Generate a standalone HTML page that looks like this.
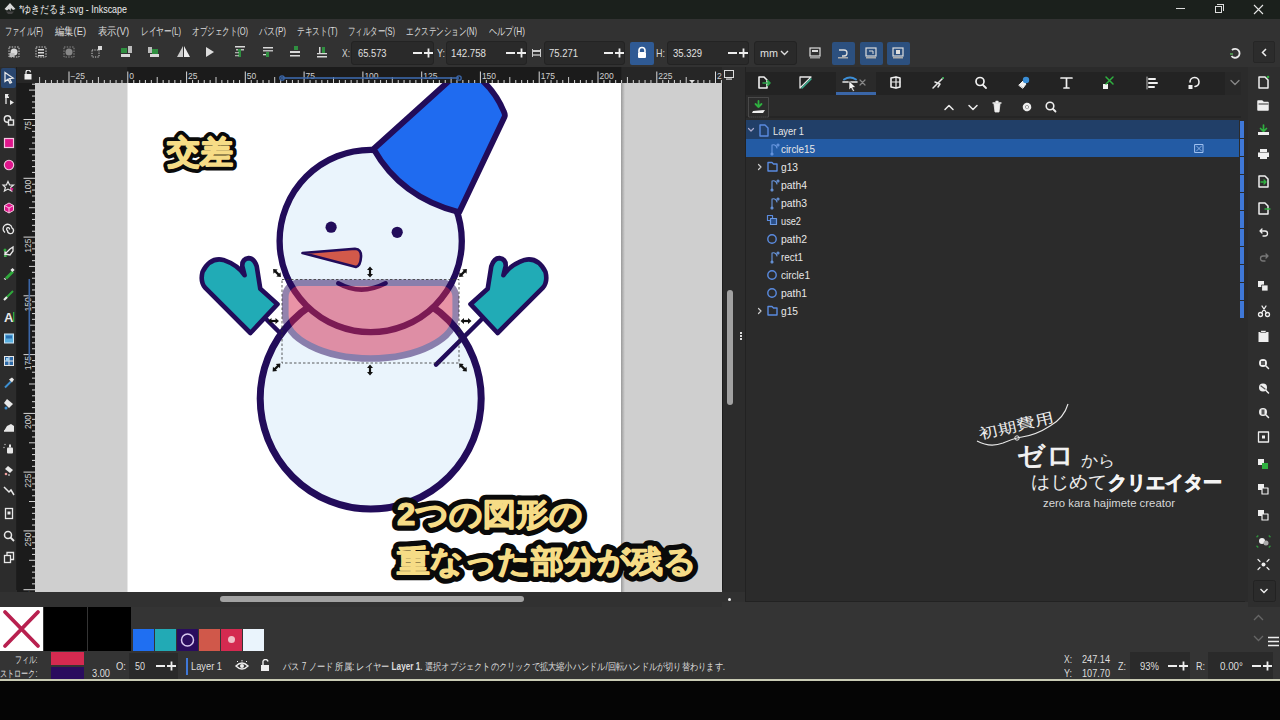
<!DOCTYPE html>
<html><head><meta charset="utf-8">
<style>
*{margin:0;padding:0;box-sizing:border-box}
html,body{width:1280px;height:720px;overflow:hidden;background:#050505;font-family:"Liberation Sans",sans-serif;color:#e6e6e6}
.a{position:absolute}
#title{left:0;top:0;width:1280px;height:18.5px;background:#1b201c}
#menu{left:0;top:18.5px;width:1280px;height:22.5px;background:#323232}
#tool{left:0;top:41px;width:1280px;height:26px;background:#323232}
#tbox{left:0;top:67px;width:17px;height:524.5px;background:#2c2c2c}
#hrul{left:35px;top:67px;width:687px;height:16px;background:#262626;overflow:hidden}
#vrul{left:17px;top:83px;width:18px;height:508.5px;background:#1b1b1b;overflow:hidden}
#corner{left:17px;top:67px;width:18px;height:16px;background:#262626}
#desk{left:35px;top:83px;width:687px;height:508.5px;background:#cfcfcf;overflow:hidden}
#vscroll{left:722px;top:67px;width:23px;height:540px;background:#2c2c2c}
#hscroll{left:0px;top:591.5px;width:745px;height:15.5px;background:#313131}
#panel{left:745px;top:67px;width:503px;height:535px;background:#2b2b2b}
#cmd{left:1248px;top:67px;width:32px;height:540px;background:#2e2e2e}
#pal{left:0;top:607px;width:1280px;height:44px;background:#343434}
#status{left:0;top:651px;width:1280px;height:28px;background:#343434}
#bottomline{left:0;top:679px;width:1280px;height:2px;background:#c9cbb4}
.mi{position:absolute;top:5px;font-size:11px;color:#dcdcdc;white-space:nowrap}
.lab{font-size:10.5px;line-height:12px;color:#d8d8d8}
.inp{position:absolute;height:24px;background:#2a2a2a;border:1px solid #232323;border-radius:3px}
.inp>span{position:absolute;top:5px;font-size:10.5px;line-height:12px;color:#e0e0e0;white-space:nowrap}
.fw{vertical-align:top}
.pm{position:absolute;top:6px}
.btnb{position:absolute;top:1px;width:23px;height:23px;background:#2c507f;border-radius:2px}
.tr{font-size:10.5px;line-height:12px;color:#e8e8e8;white-space:nowrap}
.st{font-size:10px;line-height:11px;color:#dedede;white-space:nowrap}
.st b{font-weight:bold}
</style></head>
<body>
<!-- TITLE -->
<div id="title" class="a">
  <svg class="a" style="left:3px;top:2px" width="14" height="14" viewBox="0 0 14 14"><path d="M7 1 L12.5 7 L10 8 L8 6 L7.5 9 L6 7 L4 8.5 L1.5 7 Z" fill="#d8d8d8"></path><path d="M3 9.5 L11 9.5 L9 12 L5 12Z" fill="#444"></path></svg>
  <div class="a" style="left:19px;top:2px;font-size:11px;color:#ececec;white-space:nowrap"><span style="display: inline-block; transform-origin: left center; transform: scaleX(0.8104);">*ゆきだるま.svg - Inkscape</span></div>
  <div class="a" style="left:1176px;top:8px;width:9px;height:1px;background:#ddd"></div>
  <div class="a" style="left:1215px;top:6px;width:7px;height:7px;border:1px solid #ddd"></div>
  <div class="a" style="left:1217px;top:4px;width:7px;height:7px;border-top:1px solid #ddd;border-right:1px solid #ddd"></div>
  <svg class="a" style="left:1253px;top:4px" width="11" height="11" viewBox="0 0 11 11"><path d="M1 1L10 10M10 1L1 10" stroke="#e6e6e6" stroke-width="1.1"></path></svg>
</div>
<!-- MENU -->
<div id="menu" class="a">
  <span class="mi" style="left:5px"><span style="display: inline-block; transform-origin: left center; transform: scaleX(0.6546);">ファイル(F)</span></span>
  <span class="mi" style="left:55px"><span style="display: inline-block; transform-origin: left center; transform: scaleX(0.8453);">編集(E)</span></span>
  <span class="mi" style="left:98px"><span style="display: inline-block; transform-origin: left center; transform: scaleX(0.8453);">表示(V)</span></span>
  <span class="mi" style="left:141px"><span style="display: inline-block; transform-origin: left center; transform: scaleX(0.6962);">レイヤー(L)</span></span>
  <span class="mi" style="left:192px"><span style="display: inline-block; transform-origin: left center; transform: scaleX(0.6838);">オブジェクト(O)</span></span>
  <span class="mi" style="left:259px"><span style="display: inline-block; transform-origin: left center; transform: scaleX(0.7363);">パス(P)</span></span>
  <span class="mi" style="left:297px"><span style="display: inline-block; transform-origin: left center; transform: scaleX(0.6977);">テキスト(T)</span></span>
  <span class="mi" style="left:348px"><span style="display: inline-block; transform-origin: left center; transform: scaleX(0.6746);">フィルター(S)</span></span>
  <span class="mi" style="left:406px"><span style="display: inline-block; transform-origin: left center; transform: scaleX(0.6874);">エクステンション(N)</span></span>
  <span class="mi" style="left:489px"><span style="display: inline-block; transform-origin: left center; transform: scaleX(0.7456);">ヘルプ(H)</span></span>
</div>
<!-- TOOLBAR -->
<div id="tool" class="a">
  <svg class="a" style="left:0;top:0" width="340" height="26" viewBox="0 0 340 26">
    <g fill="#d9d9d9">
      <!-- select all -->
      <rect x="9" y="6" width="10" height="10" fill="none" stroke="#ccc" stroke-dasharray="1.5 1.2"></rect>
      <circle cx="14" cy="11" r="3.5"></circle><rect x="9.5" y="12" width="5" height="4" fill="#bbb"></rect>
      <!-- select all in all layers -->
      <rect x="36" y="6" width="10" height="10" fill="none" stroke="#ccc" stroke-dasharray="1.5 1.2"></rect>
      <rect x="38" y="8" width="6" height="1.5"></rect><rect x="38" y="11" width="6" height="1.5"></rect><rect x="38" y="14" width="6" height="1.2"></rect>
      <!-- deselect -->
      <rect x="64" y="6" width="10" height="10" fill="none" stroke="#888" stroke-dasharray="1.5 1.2"></rect>
      <circle cx="69" cy="11" r="3.5" fill="#888"></circle>
      <!-- transform -->
      <rect x="92" y="9" width="7" height="7" fill="none" stroke="#ccc" stroke-dasharray="1.2 1.2"></rect><rect x="98" y="5" width="4" height="4"></rect>
      <!-- raise to top -->
      <rect x="121" y="7" width="6" height="5" fill="#2f8f40"></rect><rect x="128" y="5" width="4" height="7" fill="#bbb"></rect><rect x="121" y="13" width="9" height="3"></rect>
      <!-- lower -->
      <rect x="148" y="6" width="4" height="6" fill="#bbb"></rect><rect x="152" y="8" width="6" height="5" fill="#2f8f40"></rect><rect x="150" y="13" width="9" height="3"></rect>
      <!-- flip h -->
      <path d="M183 5 L183 16 L177 16 Z" fill="#ccc"></path><path d="M184 5 L190 16 L184 16Z" fill="#eee"></path>
      <!-- flip v (rotate) -->
      <path d="M206 6 L214 11 L206 16 Z" fill="#ddd"></path>
      <!-- align icons -->
      <rect x="235" y="5" width="10" height="1.5"></rect><rect x="236" y="8" width="8" height="1.5" fill="#bbb"></rect><rect x="238" y="8" width="3" height="8" fill="#2f8f40"></rect><rect x="235" y="11" width="4" height="1.3" fill="#aaa"></rect><rect x="235" y="14" width="4" height="1.3" fill="#aaa"></rect>
      <rect x="263" y="6" width="10" height="1.5"></rect><rect x="263" y="9" width="10" height="1.5" fill="#bbb"></rect><rect x="266" y="11" width="3" height="5" fill="#2f8f40"></rect><rect x="263" y="13" width="3" height="1.3"></rect>
      <rect x="290" y="10" width="10" height="2"></rect><rect x="294" y="5" width="4" height="4" fill="#2f8f40"></rect><rect x="290" y="14" width="10" height="1.5"></rect>
      <rect x="317" y="15" width="10" height="1.5"></rect><rect x="319" y="6" width="1.5" height="7"></rect><rect x="322" y="6" width="3" height="7" fill="#2f8f40"></rect><rect x="317" y="12" width="10" height="1.3"></rect>
    </g>
  </svg>
  <span class="a lab" style="left:342px;top:6px"><span style="display: inline-block; transform-origin: left center; transform: scaleX(0.8063);">X:</span></span>
  <div class="a inp" style="left:351px;top:0px;width:83px"><span style="left:6px"><span style="display: inline-block; transform-origin: left center; transform: scaleX(0.8872);">65.573</span></span><svg class="pm" style="left:60px" width="22" height="10" viewBox="0 0 22 10"><path d="M1 5H10M12 5H21M16.5 0.5V9.5" stroke="#eee" stroke-width="1.8"></path></svg></div>
  <span class="a lab" style="left:437px;top:6px"><span style="display: inline-block; transform-origin: left center; transform: scaleX(0.8562);">Y:</span></span>
  <div class="a inp" style="left:446px;top:0px;width:81px"><span style="left:4px"><span style="display: inline-block; transform-origin: left center; transform: scaleX(0.9218);">142.758</span></span><svg class="pm" style="left:58px" width="22" height="10" viewBox="0 0 22 10"><path d="M1 5H10M12 5H21M16.5 0.5V9.5" stroke="#eee" stroke-width="1.8"></path></svg></div>
  <svg class="a" style="left:531px;top:6px" width="12" height="12" viewBox="0 0 12 12"><rect x="1" y="3" width="9" height="2" fill="#ccc"></rect><rect x="1" y="7" width="9" height="2" fill="#999"></rect><rect x="1" y="2" width="1" height="8" fill="#ccc"></rect><rect x="9" y="2" width="1" height="8" fill="#ccc"></rect></svg>
  <div class="a inp" style="left:544px;top:0px;width:81px"><span style="left:4px"><span style="display: inline-block; transform-origin: left center; transform: scaleX(0.9027);">75.271</span></span><svg class="pm" style="left:58px" width="22" height="10" viewBox="0 0 22 10"><path d="M1 5H10M12 5H21M16.5 0.5V9.5" stroke="#eee" stroke-width="1.8"></path></svg></div>
  <div class="a" style="left:630px;top:1px;width:24px;height:23px;background:#2f5a94;border-radius:2px"></div>
  <svg class="a" style="left:636px;top:5px" width="12" height="14" viewBox="0 0 12 14"><path d="M3 6 V4.5 A3 3 0 0 1 9 4.5 V6" fill="none" stroke="#fff" stroke-width="1.6"></path><rect x="2" y="6" width="8" height="6" rx="1" fill="#fff"></rect></svg>
  <span class="a lab" style="left:656px;top:6px"><span style="display: inline-block; transform-origin: left center; transform: scaleX(0.8571);">H:</span></span>
  <div class="a inp" style="left:667px;top:0px;width:82px"><span style="left:5px"><span style="display: inline-block; transform-origin: left center; transform: scaleX(0.9027);">35.329</span></span><svg class="pm" style="left:59px" width="22" height="10" viewBox="0 0 22 10"><path d="M1 5H10M12 5H21M16.5 0.5V9.5" stroke="#eee" stroke-width="1.8"></path></svg></div>
  <div class="a inp" style="left:754px;top:0px;width:43px"><span style="left:5px"><span style="display: inline-block; transform-origin: left center; transform: scaleX(1.0286);">mm</span></span></div>
  <svg class="a" style="left:780px;top:9px" width="9" height="6" viewBox="0 0 9 6"><path d="M1 1 L4.5 4.5 L8 1" fill="none" stroke="#ddd" stroke-width="1.4"></path></svg>
  <svg class="a" style="left:808px;top:5px" width="14" height="14" viewBox="0 0 14 14"><rect x="2" y="2" width="10" height="8" fill="none" stroke="#ddd" stroke-width="1.2"></rect><rect x="4" y="4" width="6" height="2" fill="#ddd"></rect><rect x="2" y="11" width="10" height="1.5" fill="#999"></rect></svg>
  <div class="a btnb" style="left:832px"></div>
  <div class="a btnb" style="left:860px"></div>
  <div class="a btnb" style="left:887px"></div>
  <svg class="a" style="left:836px;top:5px" width="14" height="14" viewBox="0 0 14 14"><path d="M3 4 H8 A3 3 0 0 1 8 10 H6" fill="none" stroke="#ddd" stroke-width="1.3"></path><rect x="2" y="11" width="10" height="1.5" fill="#aaa"></rect></svg>
  <svg class="a" style="left:864px;top:5px" width="14" height="14" viewBox="0 0 14 14"><rect x="2" y="2" width="10" height="8" fill="none" stroke="#ddd" stroke-width="1.2"></rect><path d="M5 5 L9 5 L9 8" stroke="#ddd" fill="none"></path><rect x="2" y="11" width="10" height="1.5" fill="#aaa"></rect></svg>
  <svg class="a" style="left:891px;top:5px" width="14" height="14" viewBox="0 0 14 14"><rect x="2" y="2" width="10" height="8" fill="none" stroke="#ddd" stroke-width="1.2"></rect><rect x="5" y="4" width="4" height="4" fill="#ddd"></rect><rect x="2" y="11" width="10" height="1.5" fill="#aaa"></rect></svg>
  <svg class="a" style="left:1228px;top:5px" width="14" height="14" viewBox="0 0 14 14"><path d="M4 4 A4.5 4.5 0 1 1 3.5 10" fill="none" stroke="#e8e8e8" stroke-width="1.8"></path><path d="M2 8 L5 8" stroke="#5a5" stroke-width="1.5"></path></svg>
  <div class="a" style="left:1253px;top:0px;width:22px;height:22px;border:1px solid #262626;background:#2c2c2c;border-radius:2px"></div>
  <svg class="a" style="left:1260px;top:7px" width="8" height="9" viewBox="0 0 8 9"><path d="M6 1 L2.5 4.5 L6 8" fill="none" stroke="#eee" stroke-width="1.5"></path></svg>
</div>
<div id="tbox" class="a"></div>
<div id="corner" class="a"></div>
<div id="hrul" class="a"></div>
<div id="vrul" class="a"></div>
<div id="desk" class="a"></div>
<div id="vscroll" class="a"></div>
<div id="hscroll" class="a"></div>
<div id="panel" class="a"></div>
<div class="a" style="left:722px;top:602px;width:526px;height:5px;background:#343434"></div>
<div id="cmd" class="a"></div>
<div id="pal" class="a"></div>
<div id="status" class="a"></div>
<div id="bottomline" class="a"></div>
<div class="a" style="left:0;top:0;width:17px;height:607px;pointer-events:none"></div>
<div class="a" style="left:1px;top:68px;width:15px;height:20px;background:#29466f;border-radius:2px"></div>
<svg class="a" style="left:0;top:0" width="17" height="600" viewBox="0 0 17 600"><g transform="translate(9,77.5)"><path d="M-4 -5 L4 0.5 L0.5 1 L2.5 5 L1 5.6 L-1 1.8 L-4 4 Z" fill="#2a4a7a" stroke="#e8e8e8" stroke-width="1.3"></path></g><g transform="translate(9,99)"><rect x="-4" y="-5" width="4" height="4" fill="#e8e8e8"></rect><path d="M-3 -1 V5" stroke="#e8e8e8" stroke-width="1.3"></path><path d="M1 1 L5 3.5 L1 6 Z" fill="#e8e8e8"></path><rect x="-1" y="-4.5" width="2" height="2" fill="#333"></rect></g><g transform="translate(9,120.5)"><circle cx="-1.5" cy="-1.5" r="3.2" fill="none" stroke="#e8e8e8" stroke-width="1.4"></circle><rect x="-0.5" y="-0.5" width="5" height="5" fill="#2c2c2c" stroke="#e8e8e8" stroke-width="1.4"></rect></g><g transform="translate(9,143)"><rect x="-4.5" y="-4.5" width="9" height="9" fill="#e0158c" stroke="#f4c6e0" stroke-width="1.2"></rect></g><g transform="translate(9,165)"><circle r="4.7" fill="#e0158c" stroke="#f4c6e0" stroke-width="1.1"></circle></g><g transform="translate(9,186.5)"><path d="M-1 -5 L0.6 -1.6 L4.5 -1.4 L1.6 1 L2.6 4.6 L-1 2.6 L-4.6 4.6 L-3.6 1 L-6 -1.4 L-2.6 -1.6 Z" fill="none" stroke="#e8e8e8" stroke-width="1.2"></path><path d="M1 1 L4.5 2 L3 5 Z" fill="#e0158c"></path></g><g transform="translate(9,208)"><path d="M0 -5 L4.5 -2.5 L4.5 2.5 L0 5 L-4.5 2.5 L-4.5 -2.5 Z" fill="#e0158c" stroke="#f4c6e0" stroke-width="1"></path><path d="M-4.5 -2.5 L0 0 L4.5 -2.5 M0 0 V5" stroke="#f4c6e0" stroke-width="1" fill="none"></path></g><g transform="translate(9,229.5)"><path d="M0.5 0 A1.5 1.5 0 1 0 -1.5 1 A3 3 0 1 0 3 -1.5 A4.5 4.5 0 1 0 -4 3" fill="none" stroke="#e8e8e8" stroke-width="1.3"></path></g><g transform="translate(9,252)"><path d="M-4 5 L-4 -1 M-4 2 L1 -3 L4 -5 L4 -1 L1 3 Z" fill="none" stroke="#e8e8e8" stroke-width="1.3"></path><circle cx="-4" cy="-2" r="1.5" fill="#2faa3c"></circle><path d="M-5 4 L-2 4" stroke="#2faa3c" stroke-width="1.5"></path></g><g transform="translate(9,273.5)"><path d="M-4 4 L3 -3 L5 -1 L-2 6 Z" fill="#2faa3c"></path><path d="M-5 5 L-3 6" stroke="#e8e8e8" stroke-width="1.2"></path><rect x="2" y="-5" width="3" height="3" fill="#e8e8e8" transform="rotate(45 3.5 -3.5)"></rect></g><g transform="translate(9,295)"><path d="M-4 4 L4 -4" stroke="#2faa3c" stroke-width="2"></path><path d="M-5 5 L-2 2" stroke="#e8e8e8" stroke-width="2.2"></path></g><g transform="translate(9,317)"><text x="-5" y="5" font-size="13" font-weight="bold" fill="#e8e8e8" font-family="Liberation Sans">A</text><rect x="4" y="-5" width="1.3" height="10" fill="#2faa3c"></rect></g><g transform="translate(9,338.5)"><rect x="-4.5" y="-4.5" width="9" height="9" fill="#5ab0e0" stroke="#cfe6f5" stroke-width="1"></rect><rect x="-3" y="-3" width="6" height="3" fill="#2a6fb0"></rect></g><g transform="translate(9,361)"><rect x="-4.5" y="-4.5" width="9" height="9" fill="#2d6aa8" stroke="#e8e8e8" stroke-width="1"></rect><path d="M-4 0 H4 M0 -4 V4" stroke="#e8e8e8" stroke-width="1"></path><rect x="-3" y="-3" width="3" height="3" fill="#9fd0f0"></rect></g><g transform="translate(9,382.5)"><path d="M-4 5 L2 -1" stroke="#3d8fd0" stroke-width="2"></path><path d="M0 -3 L3 -5 L5 -3 L3 0 Z" fill="#e8e8e8"></path></g><g transform="translate(9,404)"><path d="M-2 -5 L4 0 L0 4 L-5 -1 Z" fill="#e8e8e8"></path><circle cx="-3" cy="4" r="1.5" fill="#3d8fd0"></circle></g><g transform="translate(9,427)"><path d="M-5 4 L-2 -1 L2 -3 L5 -1 L5 4 Z" fill="#e8e8e8"></path><path d="M-5 4 L5 4" stroke="#e8e8e8" stroke-width="1.5"></path></g><g transform="translate(9,448.5)"><rect x="-2" y="-1" width="6" height="6" rx="1" fill="#e8e8e8"></rect><rect x="0" y="-4" width="2" height="3" fill="#e8e8e8"></rect><circle cx="-4" cy="-4" r="0.8" fill="#aaa"></circle><circle cx="-5" cy="-1" r="0.8" fill="#aaa"></circle></g><g transform="translate(9,470)"><path d="M-1 -4 L4 0 L1 3 L-4 -1 Z" fill="#e8e8e8"></path><circle cx="-3" cy="4" r="1.3" fill="#f0a0a0"></circle><circle cx="0" cy="5" r="1" fill="#aaa"></circle></g><g transform="translate(9,491)"><path d="M-5 -4 L0 1 L2 -1 L5 4" fill="none" stroke="#e8e8e8" stroke-width="1.5"></path></g><g transform="translate(9,513.5)"><rect x="-3.5" y="-5" width="7" height="10" fill="none" stroke="#e8e8e8" stroke-width="1.3"></rect><rect x="-1.5" y="-2" width="3" height="3" fill="#e8e8e8"></rect></g><g transform="translate(9,536)"><circle cx="-1" cy="-1" r="3.5" fill="none" stroke="#e8e8e8" stroke-width="1.5"></circle><path d="M1.5 1.5 L5 5" stroke="#e8e8e8" stroke-width="1.8"></path></g><g transform="translate(9,557.5)"><rect x="-4.5" y="-2" width="6" height="7" fill="none" stroke="#e8e8e8" stroke-width="1.3"></rect><path d="M-2 -2 V-5 H4.5 V2 H1.5" fill="none" stroke="#e8e8e8" stroke-width="1.3"></path></g></svg>
<div class="a" style="left:16px;top:67px;width:1px;height:523px;background:#1e1e1e"></div>
<svg class="a" style="left:35px;top:67px" width="687" height="16" viewBox="35 0 687 16">
<rect x="127.3" y="0" width="494" height="16" fill="#1b1b1b"></rect>
<rect x="33.3" y="13" width="1.1" height="3" fill="#c8c8c8"></rect>
<rect x="39.1" y="10" width="1" height="6" fill="#cfcfcf"></rect>
<rect x="45.0" y="13" width="1.1" height="3" fill="#c8c8c8"></rect>
<rect x="50.9" y="13" width="1.1" height="3" fill="#c8c8c8"></rect>
<rect x="56.8" y="13" width="1.1" height="3" fill="#c8c8c8"></rect>
<rect x="62.6" y="13" width="1.1" height="3" fill="#c8c8c8"></rect>
<rect x="68.5" y="4.5" width="1" height="11.5" fill="#dadada"></rect>
<text x="70.5" y="11.5" font-size="8.5" fill="#d0d0d0" font-family="Liberation Sans">−25</text>
<rect x="74.4" y="13" width="1.1" height="3" fill="#c8c8c8"></rect>
<rect x="80.3" y="13" width="1.1" height="3" fill="#c8c8c8"></rect>
<rect x="86.2" y="13" width="1.1" height="3" fill="#c8c8c8"></rect>
<rect x="92.0" y="13" width="1.1" height="3" fill="#c8c8c8"></rect>
<rect x="97.9" y="10" width="1" height="6" fill="#cfcfcf"></rect>
<rect x="103.8" y="13" width="1.1" height="3" fill="#c8c8c8"></rect>
<rect x="109.7" y="13" width="1.1" height="3" fill="#c8c8c8"></rect>
<rect x="115.5" y="13" width="1.1" height="3" fill="#c8c8c8"></rect>
<rect x="121.4" y="13" width="1.1" height="3" fill="#c8c8c8"></rect>
<rect x="127.3" y="4.5" width="1" height="11.5" fill="#dadada"></rect>
<text x="129.3" y="11.5" font-size="8.5" fill="#d0d0d0" font-family="Liberation Sans">0</text>
<rect x="133.2" y="13" width="1.1" height="3" fill="#c8c8c8"></rect>
<rect x="139.1" y="13" width="1.1" height="3" fill="#c8c8c8"></rect>
<rect x="144.9" y="13" width="1.1" height="3" fill="#c8c8c8"></rect>
<rect x="150.8" y="13" width="1.1" height="3" fill="#c8c8c8"></rect>
<rect x="156.7" y="10" width="1" height="6" fill="#cfcfcf"></rect>
<rect x="162.6" y="13" width="1.1" height="3" fill="#c8c8c8"></rect>
<rect x="168.4" y="13" width="1.1" height="3" fill="#c8c8c8"></rect>
<rect x="174.3" y="13" width="1.1" height="3" fill="#c8c8c8"></rect>
<rect x="180.2" y="13" width="1.1" height="3" fill="#c8c8c8"></rect>
<rect x="186.1" y="4.5" width="1" height="11.5" fill="#dadada"></rect>
<text x="188.1" y="11.5" font-size="8.5" fill="#d0d0d0" font-family="Liberation Sans">25</text>
<rect x="192.0" y="13" width="1.1" height="3" fill="#c8c8c8"></rect>
<rect x="197.8" y="13" width="1.1" height="3" fill="#c8c8c8"></rect>
<rect x="203.7" y="13" width="1.1" height="3" fill="#c8c8c8"></rect>
<rect x="209.6" y="13" width="1.1" height="3" fill="#c8c8c8"></rect>
<rect x="215.5" y="10" width="1" height="6" fill="#cfcfcf"></rect>
<rect x="221.3" y="13" width="1.1" height="3" fill="#c8c8c8"></rect>
<rect x="227.2" y="13" width="1.1" height="3" fill="#c8c8c8"></rect>
<rect x="233.1" y="13" width="1.1" height="3" fill="#c8c8c8"></rect>
<rect x="239.0" y="13" width="1.1" height="3" fill="#c8c8c8"></rect>
<rect x="244.8" y="4.5" width="1" height="11.5" fill="#dadada"></rect>
<text x="246.8" y="11.5" font-size="8.5" fill="#d0d0d0" font-family="Liberation Sans">50</text>
<rect x="250.7" y="13" width="1.1" height="3" fill="#c8c8c8"></rect>
<rect x="256.6" y="13" width="1.1" height="3" fill="#c8c8c8"></rect>
<rect x="262.5" y="13" width="1.1" height="3" fill="#c8c8c8"></rect>
<rect x="268.4" y="13" width="1.1" height="3" fill="#c8c8c8"></rect>
<rect x="274.2" y="10" width="1" height="6" fill="#cfcfcf"></rect>
<rect x="280.1" y="13" width="1.1" height="3" fill="#c8c8c8"></rect>
<rect x="286.0" y="13" width="1.1" height="3" fill="#c8c8c8"></rect>
<rect x="291.9" y="13" width="1.1" height="3" fill="#c8c8c8"></rect>
<rect x="297.7" y="13" width="1.1" height="3" fill="#c8c8c8"></rect>
<rect x="303.6" y="4.5" width="1" height="11.5" fill="#dadada"></rect>
<text x="305.6" y="11.5" font-size="8.5" fill="#d0d0d0" font-family="Liberation Sans">75</text>
<rect x="309.5" y="13" width="1.1" height="3" fill="#c8c8c8"></rect>
<rect x="315.4" y="13" width="1.1" height="3" fill="#c8c8c8"></rect>
<rect x="321.3" y="13" width="1.1" height="3" fill="#c8c8c8"></rect>
<rect x="327.1" y="13" width="1.1" height="3" fill="#c8c8c8"></rect>
<rect x="333.0" y="10" width="1" height="6" fill="#cfcfcf"></rect>
<rect x="338.9" y="13" width="1.1" height="3" fill="#c8c8c8"></rect>
<rect x="344.8" y="13" width="1.1" height="3" fill="#c8c8c8"></rect>
<rect x="350.6" y="13" width="1.1" height="3" fill="#c8c8c8"></rect>
<rect x="356.5" y="13" width="1.1" height="3" fill="#c8c8c8"></rect>
<rect x="362.4" y="4.5" width="1" height="11.5" fill="#dadada"></rect>
<text x="364.4" y="11.5" font-size="8.5" fill="#d0d0d0" font-family="Liberation Sans">100</text>
<rect x="368.3" y="13" width="1.1" height="3" fill="#c8c8c8"></rect>
<rect x="374.2" y="13" width="1.1" height="3" fill="#c8c8c8"></rect>
<rect x="380.0" y="13" width="1.1" height="3" fill="#c8c8c8"></rect>
<rect x="385.9" y="13" width="1.1" height="3" fill="#c8c8c8"></rect>
<rect x="391.8" y="10" width="1" height="6" fill="#cfcfcf"></rect>
<rect x="397.7" y="13" width="1.1" height="3" fill="#c8c8c8"></rect>
<rect x="403.5" y="13" width="1.1" height="3" fill="#c8c8c8"></rect>
<rect x="409.4" y="13" width="1.1" height="3" fill="#c8c8c8"></rect>
<rect x="415.3" y="13" width="1.1" height="3" fill="#c8c8c8"></rect>
<rect x="421.2" y="4.5" width="1" height="11.5" fill="#dadada"></rect>
<text x="423.2" y="11.5" font-size="8.5" fill="#d0d0d0" font-family="Liberation Sans">125</text>
<rect x="427.1" y="13" width="1.1" height="3" fill="#c8c8c8"></rect>
<rect x="432.9" y="13" width="1.1" height="3" fill="#c8c8c8"></rect>
<rect x="438.8" y="13" width="1.1" height="3" fill="#c8c8c8"></rect>
<rect x="444.7" y="13" width="1.1" height="3" fill="#c8c8c8"></rect>
<rect x="450.6" y="10" width="1" height="6" fill="#cfcfcf"></rect>
<rect x="456.4" y="13" width="1.1" height="3" fill="#c8c8c8"></rect>
<rect x="462.3" y="13" width="1.1" height="3" fill="#c8c8c8"></rect>
<rect x="468.2" y="13" width="1.1" height="3" fill="#c8c8c8"></rect>
<rect x="474.1" y="13" width="1.1" height="3" fill="#c8c8c8"></rect>
<rect x="479.9" y="4.5" width="1" height="11.5" fill="#dadada"></rect>
<text x="481.9" y="11.5" font-size="8.5" fill="#d0d0d0" font-family="Liberation Sans">150</text>
<rect x="485.8" y="13" width="1.1" height="3" fill="#c8c8c8"></rect>
<rect x="491.7" y="13" width="1.1" height="3" fill="#c8c8c8"></rect>
<rect x="497.6" y="13" width="1.1" height="3" fill="#c8c8c8"></rect>
<rect x="503.5" y="13" width="1.1" height="3" fill="#c8c8c8"></rect>
<rect x="509.3" y="10" width="1" height="6" fill="#cfcfcf"></rect>
<rect x="515.2" y="13" width="1.1" height="3" fill="#c8c8c8"></rect>
<rect x="521.1" y="13" width="1.1" height="3" fill="#c8c8c8"></rect>
<rect x="527.0" y="13" width="1.1" height="3" fill="#c8c8c8"></rect>
<rect x="532.8" y="13" width="1.1" height="3" fill="#c8c8c8"></rect>
<rect x="538.7" y="4.5" width="1" height="11.5" fill="#dadada"></rect>
<text x="540.7" y="11.5" font-size="8.5" fill="#d0d0d0" font-family="Liberation Sans">175</text>
<rect x="544.6" y="13" width="1.1" height="3" fill="#c8c8c8"></rect>
<rect x="550.5" y="13" width="1.1" height="3" fill="#c8c8c8"></rect>
<rect x="556.4" y="13" width="1.1" height="3" fill="#c8c8c8"></rect>
<rect x="562.2" y="13" width="1.1" height="3" fill="#c8c8c8"></rect>
<rect x="568.1" y="10" width="1" height="6" fill="#cfcfcf"></rect>
<rect x="574.0" y="13" width="1.1" height="3" fill="#c8c8c8"></rect>
<rect x="579.9" y="13" width="1.1" height="3" fill="#c8c8c8"></rect>
<rect x="585.7" y="13" width="1.1" height="3" fill="#c8c8c8"></rect>
<rect x="591.6" y="13" width="1.1" height="3" fill="#c8c8c8"></rect>
<rect x="597.5" y="4.5" width="1" height="11.5" fill="#dadada"></rect>
<text x="599.5" y="11.5" font-size="8.5" fill="#d0d0d0" font-family="Liberation Sans">200</text>
<rect x="603.4" y="13" width="1.1" height="3" fill="#c8c8c8"></rect>
<rect x="609.3" y="13" width="1.1" height="3" fill="#c8c8c8"></rect>
<rect x="615.1" y="13" width="1.1" height="3" fill="#c8c8c8"></rect>
<rect x="621.0" y="13" width="1.1" height="3" fill="#c8c8c8"></rect>
<rect x="626.9" y="10" width="1" height="6" fill="#cfcfcf"></rect>
<rect x="632.8" y="13" width="1.1" height="3" fill="#c8c8c8"></rect>
<rect x="638.6" y="13" width="1.1" height="3" fill="#c8c8c8"></rect>
<rect x="644.5" y="13" width="1.1" height="3" fill="#c8c8c8"></rect>
<rect x="650.4" y="13" width="1.1" height="3" fill="#c8c8c8"></rect>
<rect x="656.3" y="4.5" width="1" height="11.5" fill="#dadada"></rect>
<text x="658.3" y="11.5" font-size="8.5" fill="#d0d0d0" font-family="Liberation Sans">225</text>
<rect x="662.2" y="13" width="1.1" height="3" fill="#c8c8c8"></rect>
<rect x="668.0" y="13" width="1.1" height="3" fill="#c8c8c8"></rect>
<rect x="673.9" y="13" width="1.1" height="3" fill="#c8c8c8"></rect>
<rect x="679.8" y="13" width="1.1" height="3" fill="#c8c8c8"></rect>
<rect x="685.7" y="10" width="1" height="6" fill="#cfcfcf"></rect>
<rect x="691.5" y="13" width="1.1" height="3" fill="#c8c8c8"></rect>
<rect x="697.4" y="13" width="1.1" height="3" fill="#c8c8c8"></rect>
<rect x="703.3" y="13" width="1.1" height="3" fill="#c8c8c8"></rect>
<rect x="709.2" y="13" width="1.1" height="3" fill="#c8c8c8"></rect>
<rect x="715.0" y="4.5" width="1" height="11.5" fill="#dadada"></rect>
<text x="717.0" y="11.5" font-size="8.5" fill="#d0d0d0" font-family="Liberation Sans">250</text>
<rect x="720.9" y="13" width="1.1" height="3" fill="#c8c8c8"></rect>
<rect x="281" y="10.2" width="178" height="1.6" fill="#3b66a8"></rect><circle cx="282" cy="11" r="2.2" fill="none" stroke="#3b66a8" stroke-width="1.3"></circle><circle cx="459" cy="11" r="2.2" fill="none" stroke="#3b66a8" stroke-width="1.3"></circle>
<path d="M689 13 L695 13 L692 16 Z" fill="#ddd"></path>
</svg>
<svg class="a" style="left:17px;top:83px" width="18" height="508.5" viewBox="17 83 18 508.5">
<rect x="32" y="83.7" width="3" height="1.1" fill="#c8c8c8"></rect>
<rect x="29" y="89.6" width="6" height="1" fill="#cfcfcf"></rect>
<rect x="32" y="95.5" width="3" height="1.1" fill="#c8c8c8"></rect>
<rect x="32" y="101.4" width="3" height="1.1" fill="#c8c8c8"></rect>
<rect x="32" y="107.2" width="3" height="1.1" fill="#c8c8c8"></rect>
<rect x="32" y="113.1" width="3" height="1.1" fill="#c8c8c8"></rect>
<rect x="23.5" y="119.0" width="11.5" height="1" fill="#dadada"></rect>
<text transform="translate(30.5,121.0) rotate(-90)" x="0" y="0" font-size="8.5" fill="#d0d0d0" font-family="Liberation Sans" text-anchor="end">75</text>
<rect x="32" y="124.9" width="3" height="1.1" fill="#c8c8c8"></rect>
<rect x="32" y="130.8" width="3" height="1.1" fill="#c8c8c8"></rect>
<rect x="32" y="136.6" width="3" height="1.1" fill="#c8c8c8"></rect>
<rect x="32" y="142.5" width="3" height="1.1" fill="#c8c8c8"></rect>
<rect x="29" y="148.4" width="6" height="1" fill="#cfcfcf"></rect>
<rect x="32" y="154.3" width="3" height="1.1" fill="#c8c8c8"></rect>
<rect x="32" y="160.1" width="3" height="1.1" fill="#c8c8c8"></rect>
<rect x="32" y="166.0" width="3" height="1.1" fill="#c8c8c8"></rect>
<rect x="32" y="171.9" width="3" height="1.1" fill="#c8c8c8"></rect>
<rect x="23.5" y="177.8" width="11.5" height="1" fill="#dadada"></rect>
<text transform="translate(30.5,179.8) rotate(-90)" x="0" y="0" font-size="8.5" fill="#d0d0d0" font-family="Liberation Sans" text-anchor="end">100</text>
<rect x="32" y="183.7" width="3" height="1.1" fill="#c8c8c8"></rect>
<rect x="32" y="189.5" width="3" height="1.1" fill="#c8c8c8"></rect>
<rect x="32" y="195.4" width="3" height="1.1" fill="#c8c8c8"></rect>
<rect x="32" y="201.3" width="3" height="1.1" fill="#c8c8c8"></rect>
<rect x="29" y="207.2" width="6" height="1" fill="#cfcfcf"></rect>
<rect x="32" y="213.0" width="3" height="1.1" fill="#c8c8c8"></rect>
<rect x="32" y="218.9" width="3" height="1.1" fill="#c8c8c8"></rect>
<rect x="32" y="224.8" width="3" height="1.1" fill="#c8c8c8"></rect>
<rect x="32" y="230.7" width="3" height="1.1" fill="#c8c8c8"></rect>
<rect x="23.5" y="236.6" width="11.5" height="1" fill="#dadada"></rect>
<text transform="translate(30.5,238.6) rotate(-90)" x="0" y="0" font-size="8.5" fill="#d0d0d0" font-family="Liberation Sans" text-anchor="end">125</text>
<rect x="32" y="242.4" width="3" height="1.1" fill="#c8c8c8"></rect>
<rect x="32" y="248.3" width="3" height="1.1" fill="#c8c8c8"></rect>
<rect x="32" y="254.2" width="3" height="1.1" fill="#c8c8c8"></rect>
<rect x="32" y="260.1" width="3" height="1.1" fill="#c8c8c8"></rect>
<rect x="29" y="265.9" width="6" height="1" fill="#cfcfcf"></rect>
<rect x="32" y="271.8" width="3" height="1.1" fill="#c8c8c8"></rect>
<rect x="32" y="277.7" width="3" height="1.1" fill="#c8c8c8"></rect>
<rect x="32" y="283.6" width="3" height="1.1" fill="#c8c8c8"></rect>
<rect x="32" y="289.4" width="3" height="1.1" fill="#c8c8c8"></rect>
<rect x="23.5" y="295.3" width="11.5" height="1" fill="#dadada"></rect>
<text transform="translate(30.5,297.3) rotate(-90)" x="0" y="0" font-size="8.5" fill="#d0d0d0" font-family="Liberation Sans" text-anchor="end">150</text>
<rect x="32" y="301.2" width="3" height="1.1" fill="#c8c8c8"></rect>
<rect x="32" y="307.1" width="3" height="1.1" fill="#c8c8c8"></rect>
<rect x="32" y="313.0" width="3" height="1.1" fill="#c8c8c8"></rect>
<rect x="32" y="318.8" width="3" height="1.1" fill="#c8c8c8"></rect>
<rect x="29" y="324.7" width="6" height="1" fill="#cfcfcf"></rect>
<rect x="32" y="330.6" width="3" height="1.1" fill="#c8c8c8"></rect>
<rect x="32" y="336.5" width="3" height="1.1" fill="#c8c8c8"></rect>
<rect x="32" y="342.3" width="3" height="1.1" fill="#c8c8c8"></rect>
<rect x="32" y="348.2" width="3" height="1.1" fill="#c8c8c8"></rect>
<rect x="23.5" y="354.1" width="11.5" height="1" fill="#dadada"></rect>
<text transform="translate(30.5,356.1) rotate(-90)" x="0" y="0" font-size="8.5" fill="#d0d0d0" font-family="Liberation Sans" text-anchor="end">175</text>
<rect x="32" y="360.0" width="3" height="1.1" fill="#c8c8c8"></rect>
<rect x="32" y="365.9" width="3" height="1.1" fill="#c8c8c8"></rect>
<rect x="32" y="371.7" width="3" height="1.1" fill="#c8c8c8"></rect>
<rect x="32" y="377.6" width="3" height="1.1" fill="#c8c8c8"></rect>
<rect x="29" y="383.5" width="6" height="1" fill="#cfcfcf"></rect>
<rect x="32" y="389.4" width="3" height="1.1" fill="#c8c8c8"></rect>
<rect x="32" y="395.2" width="3" height="1.1" fill="#c8c8c8"></rect>
<rect x="32" y="401.1" width="3" height="1.1" fill="#c8c8c8"></rect>
<rect x="32" y="407.0" width="3" height="1.1" fill="#c8c8c8"></rect>
<rect x="23.5" y="412.9" width="11.5" height="1" fill="#dadada"></rect>
<text transform="translate(30.5,414.9) rotate(-90)" x="0" y="0" font-size="8.5" fill="#d0d0d0" font-family="Liberation Sans" text-anchor="end">200</text>
<rect x="32" y="418.8" width="3" height="1.1" fill="#c8c8c8"></rect>
<rect x="32" y="424.6" width="3" height="1.1" fill="#c8c8c8"></rect>
<rect x="32" y="430.5" width="3" height="1.1" fill="#c8c8c8"></rect>
<rect x="32" y="436.4" width="3" height="1.1" fill="#c8c8c8"></rect>
<rect x="29" y="442.3" width="6" height="1" fill="#cfcfcf"></rect>
<rect x="32" y="448.1" width="3" height="1.1" fill="#c8c8c8"></rect>
<rect x="32" y="454.0" width="3" height="1.1" fill="#c8c8c8"></rect>
<rect x="32" y="459.9" width="3" height="1.1" fill="#c8c8c8"></rect>
<rect x="32" y="465.8" width="3" height="1.1" fill="#c8c8c8"></rect>
<rect x="23.5" y="471.6" width="11.5" height="1" fill="#dadada"></rect>
<text transform="translate(30.5,473.6) rotate(-90)" x="0" y="0" font-size="8.5" fill="#d0d0d0" font-family="Liberation Sans" text-anchor="end">225</text>
<rect x="32" y="477.5" width="3" height="1.1" fill="#c8c8c8"></rect>
<rect x="32" y="483.4" width="3" height="1.1" fill="#c8c8c8"></rect>
<rect x="32" y="489.3" width="3" height="1.1" fill="#c8c8c8"></rect>
<rect x="32" y="495.2" width="3" height="1.1" fill="#c8c8c8"></rect>
<rect x="29" y="501.0" width="6" height="1" fill="#cfcfcf"></rect>
<rect x="32" y="506.9" width="3" height="1.1" fill="#c8c8c8"></rect>
<rect x="32" y="512.8" width="3" height="1.1" fill="#c8c8c8"></rect>
<rect x="32" y="518.7" width="3" height="1.1" fill="#c8c8c8"></rect>
<rect x="32" y="524.5" width="3" height="1.1" fill="#c8c8c8"></rect>
<rect x="23.5" y="530.4" width="11.5" height="1" fill="#dadada"></rect>
<text transform="translate(30.5,532.4) rotate(-90)" x="0" y="0" font-size="8.5" fill="#d0d0d0" font-family="Liberation Sans" text-anchor="end">250</text>
<rect x="32" y="536.3" width="3" height="1.1" fill="#c8c8c8"></rect>
<rect x="32" y="542.2" width="3" height="1.1" fill="#c8c8c8"></rect>
<rect x="32" y="548.1" width="3" height="1.1" fill="#c8c8c8"></rect>
<rect x="32" y="553.9" width="3" height="1.1" fill="#c8c8c8"></rect>
<rect x="29" y="559.8" width="6" height="1" fill="#cfcfcf"></rect>
<rect x="32" y="565.7" width="3" height="1.1" fill="#c8c8c8"></rect>
<rect x="32" y="571.6" width="3" height="1.1" fill="#c8c8c8"></rect>
<rect x="32" y="577.4" width="3" height="1.1" fill="#c8c8c8"></rect>
<rect x="32" y="583.3" width="3" height="1.1" fill="#c8c8c8"></rect>
<rect x="23.5" y="589.2" width="11.5" height="1" fill="#dadada"></rect>
<text transform="translate(30.5,591.2) rotate(-90)" x="0" y="0" font-size="8.5" fill="#d0d0d0" font-family="Liberation Sans" text-anchor="end">275</text>
<rect x="32" y="595.1" width="3" height="1.1" fill="#c8c8c8"></rect>
<rect x="28.5" y="279" width="1.6" height="84" fill="#3b66a8"></rect>
</svg>
<svg class="a" style="left:24px;top:70px" width="10" height="10" viewBox="0 0 10 10"><rect x="0.5" y="4" width="7" height="5.5" fill="#eee"></rect><path d="M2 4 V2.5 A2.2 2.2 0 0 1 6.4 2.2" fill="none" stroke="#eee" stroke-width="1.2"></path></svg>
<svg class="a" style="left:35px;top:83px" width="687" height="508.5" viewBox="35 83 687 508.5" font-family="Liberation Sans">
  <defs>
    <linearGradient id="shd" x1="0" x2="1"><stop offset="0" stop-color="#9a9a9a"></stop><stop offset="1" stop-color="#cfcfcf"></stop></linearGradient>
  </defs>
  <rect x="621" y="83" width="4" height="509" fill="url(#shd)"></rect>
  <rect x="127.5" y="83" width="493.5" height="509" fill="#ffffff"></rect>
  <!-- label 交差 -->
  <text x="167" y="163" font-size="32" font-weight="900" fill="#0a0a0a" stroke="#0a0a0a" stroke-width="9" stroke-linejoin="round" paint-order="stroke" textLength="66" lengthAdjust="spacingAndGlyphs">交差</text>
  <text x="167" y="163" font-size="32" font-weight="900" fill="#f6dc86" stroke="#f6dc86" stroke-width="1.6" stroke-linejoin="round" paint-order="stroke" textLength="66" lengthAdjust="spacingAndGlyphs">交差</text>
  <g stroke="#220c5a" stroke-linejoin="round" stroke-linecap="round">
    <!-- left stick (behind body) -->
    <path d="M267 320 L312 364.6" stroke-width="4.5" fill="none"></path>
    <!-- body -->
    <circle cx="370.7" cy="398.6" r="110.5" fill="#eaf4fc" stroke-width="7"></circle>
    <!-- head -->
    <circle cx="370.7" cy="241" r="91.1" fill="#eaf4fc" stroke-width="6.3"></circle>
    <!-- hat -->
    <path d="M373.6 149 L455.6 75 L476 75 Q495 90 503.8 111.5 Q505.5 115 504.5 117 L459.2 212.3 Q400.8 197.4 373.6 149 Z" fill="#1f6bf0" stroke-width="5.8"></path>
    <!-- eyes -->
    <circle cx="331.1" cy="227.2" r="5.6" fill="#220c5a" stroke="none"></circle>
    <circle cx="397.2" cy="232.3" r="5.6" fill="#220c5a" stroke="none"></circle>
    <!-- nose -->
    <path d="M302.5 253 L355 248.7 Q361.5 249 361 257 Q360.5 266 356 267 Z" fill="#d2594a" stroke-width="2.6"></path>
    <!-- mouth -->
    <path d="M338.3 283.3 Q361 296 385.6 283.3" fill="none" stroke-width="4.6"></path>
    <!-- right stick (front) -->
    <path d="M481 320 L436 364.6" stroke-width="4.5" fill="none"></path>
    <!-- right mitten -->
    <path d="M470.5 304.2 L487.7 288.8 L491.3 266.2 Q494 258 499.4 258.1 Q506 259 505.7 266 L503.4 275.3 Q510 265 524.7 259.9 Q538 257 545.5 272 Q548 282 542.7 287.9 L497.6 333 Z" fill="#21abb6" stroke-width="4.6"></path>
    <!-- left mitten (mirror about x=374) -->
    <g transform="translate(748,0) scale(-1,1)">
    <path d="M470.5 304.2 L487.7 288.8 L491.3 266.2 Q494 258 499.4 258.1 Q506 259 505.7 266 L503.4 275.3 Q510 265 524.7 259.9 Q538 257 545.5 272 Q548 282 542.7 287.9 L497.6 333 Z" fill="#21abb6" stroke-width="4.6"></path>
    </g>
  </g>
  <!-- scarf (50% opacity) -->
  <g opacity="0.5">
    <path d="M285.3 315 L285.3 296.7 A14 14 0 0 1 299.3 282.7 L441.7 282.7 A14 14 0 0 1 455.7 296.7 L455.7 315 A85.2 43.5 0 0 1 285.3 315 Z" fill="#d42a50" stroke="#2a0a5e" stroke-width="6.6" stroke-linejoin="round"></path>
  </g>
  <!-- selection bbox -->
  <rect x="282" y="279.5" width="177" height="83.5" fill="none" stroke="#333" stroke-width="0.8" stroke-dasharray="2.5 2"></rect>
  <g fill="#111" stroke="#111">
    <g transform="translate(277,273) rotate(45)"><path d="M-3 0 H3" stroke-width="2.2"></path><path d="M-5.5 0 L-2 -3 L-2 3Z M5.5 0 L2 -3 L2 3Z" stroke="none"></path></g>
    <g transform="translate(463,273) rotate(-45)"><path d="M-3 0 H3" stroke-width="2.2"></path><path d="M-5.5 0 L-2 -3 L-2 3Z M5.5 0 L2 -3 L2 3Z" stroke="none"></path></g>
    <g transform="translate(276.5,367.5) rotate(-45)"><path d="M-3 0 H3" stroke-width="2.2"></path><path d="M-5.5 0 L-2 -3 L-2 3Z M5.5 0 L2 -3 L2 3Z" stroke="none"></path></g>
    <g transform="translate(463,367.5) rotate(45)"><path d="M-3 0 H3" stroke-width="2.2"></path><path d="M-5.5 0 L-2 -3 L-2 3Z M5.5 0 L2 -3 L2 3Z" stroke="none"></path></g>
    <g transform="translate(370,272) rotate(90)"><path d="M-3 0 H3" stroke-width="2.2"></path><path d="M-5.5 0 L-2 -3 L-2 3Z M5.5 0 L2 -3 L2 3Z" stroke="none"></path></g>
    <g transform="translate(370,370) rotate(90)"><path d="M-3 0 H3" stroke-width="2.2"></path><path d="M-5.5 0 L-2 -3 L-2 3Z M5.5 0 L2 -3 L2 3Z" stroke="none"></path></g>
    <g transform="translate(273.5,321)"><path d="M-3 0 H3" stroke-width="2.2"></path><path d="M-5.5 0 L-2 -3 L-2 3Z M5.5 0 L2 -3 L2 3Z" stroke="none"></path></g>
    <g transform="translate(466,321)"><path d="M-3 0 H3" stroke-width="2.2"></path><path d="M-5.5 0 L-2 -3 L-2 3Z M5.5 0 L2 -3 L2 3Z" stroke="none"></path></g>
  </g>
  <!-- caption -->
  <text x="397" y="525" font-size="31" font-weight="900" fill="#0a0a0a" stroke="#0a0a0a" stroke-width="11.5" stroke-linejoin="round" paint-order="stroke" textLength="186" lengthAdjust="spacingAndGlyphs">2つの図形の</text>
  <text x="397" y="525" font-size="31" font-weight="900" fill="#f6dc86" stroke="#f6dc86" stroke-width="1.2" stroke-linejoin="round" paint-order="stroke" textLength="186" lengthAdjust="spacingAndGlyphs">2つの図形の</text>
  <text x="397" y="572" font-size="31" font-weight="900" fill="#0a0a0a" stroke="#0a0a0a" stroke-width="11.5" stroke-linejoin="round" paint-order="stroke" textLength="300" lengthAdjust="spacingAndGlyphs">重なった部分が残る</text>
  <text x="397" y="572" font-size="31" font-weight="900" fill="#f6dc86" stroke="#f6dc86" stroke-width="1.2" stroke-linejoin="round" paint-order="stroke" textLength="300" lengthAdjust="spacingAndGlyphs">重なった部分が残る</text>
</svg>
<!-- vertical scroll thumb & handle -->
<div class="a" style="left:722px;top:83px;width:1px;height:507px;background:#1c1c1c"></div>
<div class="a" style="left:726.5px;top:290px;width:6px;height:115px;background:#a2a2a2;border-radius:3px"></div>
<div class="a" style="left:739.5px;top:332px;width:2px;height:2px;background:#ddd;box-shadow:0 3px 0 #ddd,0 6px 0 #ddd"></div>
<svg class="a" style="left:724px;top:70px" width="10" height="10" viewBox="0 0 10 10"><rect x="0.5" y="0.5" width="9" height="7" fill="none" stroke="#ddd"></rect><rect x="2" y="8.5" width="6" height="1.2" fill="#ddd"></rect></svg>
<!-- horizontal scroll thumb -->
<div class="a" style="left:220px;top:596px;width:304px;height:6px;background:#a2a2a2;border-radius:3px"></div>
<div class="a" style="left:728px;top:598px;width:3px;height:3px;background:#eee;border-radius:50%"></div>
<!-- panel -->
<div class="a" style="left:745px;top:67px;width:1px;height:535px;background:#222"></div>
<div class="a" style="left:746px;top:72px;width:495px;height:23px;background:#232323"></div>
<div class="a" style="left:836px;top:72px;width:40px;height:23px;background:#2a2a2a"></div>
<div class="a" style="left:836px;top:92px;width:40px;height:3px;background:#3a66a8"></div>
<div class="a" style="left:1225px;top:72px;width:16px;height:23px;background:#282828"></div>
<div class="a" style="left:746px;top:116px;width:495px;height:2px;background:#252525"></div>
<div class="a" style="left:746px;top:601px;width:499px;height:1px;background:#222"></div>
<svg class="a" style="left:745px;top:67px" width="503" height="60" viewBox="745 67 503 60">
  <g stroke-linejoin="round" stroke-linecap="round" fill="none">
    <!-- doc w/ arrow -->
    <path d="M759 77 H764 L767 80 V88 H759 Z" stroke="#f0f0f0" stroke-width="1.6"></path>
    <path d="M763 83 H770 M767.5 80.5 L770 83 L767.5 85.5" stroke="#2da84a" stroke-width="1.6"></path>
    <!-- square with pen -->
    <path d="M800 77 H811 L800 88 Z" stroke="#e8e8e8" stroke-width="1.3"></path>
    <path d="M802 88 L811 79" stroke="#3aa88a" stroke-width="1.6"></path>
    <!-- layers (active) -->
    <path d="M844 79.5 Q850 75.5 856 79.5" stroke="#3d8fd8" stroke-width="2"></path>
    <path d="M843 82 H857" stroke="#e8e8e8" stroke-width="1.6"></path>
    <path d="M849 81 L849 90 L851 88 L853 91.5 L854.5 90.8 L852.7 87.6 L855.5 87.3 Z" fill="#f4f4f4" stroke="#222" stroke-width="0.6"></path>
    <path d="M860 80 L865 85 M865 80 L860 85" stroke="#888" stroke-width="1.2"></path>
    <!-- objects -->
    <path d="M891 78 L896 77 L900 78 V87 L896 88 L891 87 Z" stroke="#eee" stroke-width="1.6"></path>
    <path d="M896 77 V88 M892 82 H900" stroke="#eee" stroke-width="1.2"></path>
    <!-- path xml -->
    <path d="M933 88 L943 78 M935 82 L940 84 L938 87" stroke="#e6e6e6" stroke-width="1.5"></path>
    <circle cx="943" cy="78" r="1" fill="#2da84a" stroke="none"></circle>
    <!-- search -->
    <circle cx="980" cy="81.5" r="4" stroke="#f0f0f0" stroke-width="1.7"></circle>
    <path d="M983 85 L986 88" stroke="#f0f0f0" stroke-width="1.8"></path>
    <!-- fill stroke -->
    <path d="M1019 85 L1023 81 L1026 84 L1023 88 Z" fill="#f2f2f2" stroke="#f2f2f2" stroke-width="1"></path>
    <circle cx="1026" cy="80" r="3.2" fill="#3a8ed6" stroke="none"></circle>
    <!-- Text -->
    <path d="M1061 78 H1072 M1066.5 78 V88 M1064 88 H1069" stroke="#f0f0f0" stroke-width="1.7"></path>
    <!-- swatches / scissors -->
    <rect x="1103" y="84" width="5" height="5" fill="#f2f2f2" stroke="none"></rect>
    <path d="M1106 77 L1113 84 M1113 77 L1106 84" stroke="#2fb040" stroke-width="1.5"></path>
    <!-- align -->
    <path d="M1147 77 V89" stroke="#bbb" stroke-width="1"></path>
    <path d="M1149 79 H1155 M1149 83 H1157 M1149 87 H1154" stroke="#f0f0f0" stroke-width="2"></path>
    <!-- transform -->
    <path d="M1190 82 A4.5 4.5 0 1 1 1195 86.5" stroke="#f0f0f0" stroke-width="1.6"></path>
    <rect x="1188.5" y="85" width="4" height="4" fill="#f0f0f0" stroke="none"></rect>
    <path d="M1231 80.5 L1235 84.5 L1239 80.5" stroke="#888" stroke-width="1.3"></path>
    <!-- second row -->
    <rect x="748.5" y="97.5" width="20" height="19.5" stroke="#555" stroke-width="0.8" stroke-dasharray="1 1"></rect>
    <path d="M758.5 101 V107 M755.5 104 L758.5 107 L761.5 104" stroke="#2fb040" stroke-width="1.8"></path>
    <path d="M753 111 L765 110 L763 113 L752 113 Z" fill="#f0f0f0" stroke="none"></path>
    <path d="M945 109.5 L949 105.5 L953 109.5" stroke="#eee" stroke-width="1.5"></path>
    <path d="M969 105.5 L973 109.5 L977 105.5" stroke="#eee" stroke-width="1.5"></path>
    <path d="M993 103 H1001 M996 101.5 H998" stroke="#eee" stroke-width="1.3"></path>
    <path d="M994 104 L995 112 H999 L1000 104 Z" fill="#eee" stroke="#eee" stroke-width="0.8"></path>
    <circle cx="1027" cy="107" r="3" stroke="#eee" stroke-width="2.6" stroke-dasharray="1.3 1"></circle>
    <circle cx="1027" cy="107" r="1.5" fill="#eee" stroke="none"></circle>
    <circle cx="1050" cy="106" r="3.8" stroke="#eee" stroke-width="1.6"></circle>
    <path d="M1053 109 L1055.5 111.5" stroke="#eee" stroke-width="1.8"></path>
  </g>
</svg>
<!-- tree -->
<div class="a" style="left:746px;top:120px;width:493px;height:19px;background:#213f68"></div>
<div class="a" style="left:746px;top:139px;width:493px;height:18px;background:#235ba4"></div>
<svg class="a" style="left:1239px;top:121px" width="6" height="200" viewBox="0 0 6 200">
  <g fill="#3f78d8">
    <rect x="1" y="0" width="4" height="17"></rect><rect x="1" y="18" width="4" height="17"></rect><rect x="1" y="36" width="4" height="17"></rect><rect x="1" y="54" width="4" height="17"></rect><rect x="1" y="72" width="4" height="17"></rect><rect x="1" y="90" width="4" height="17"></rect><rect x="1" y="108" width="4" height="17"></rect><rect x="1" y="126" width="4" height="17"></rect><rect x="1" y="144" width="4" height="17"></rect><rect x="1" y="162" width="4" height="17"></rect><rect x="1" y="180" width="4" height="17"></rect>
  </g>
</svg>
<svg class="a" style="left:746px;top:121px" width="470" height="200" viewBox="746 121 470 200">
  <g fill="none" stroke-linecap="round" stroke-linejoin="round">
    <path d="M748.5 128.5 L751 131 L753.5 128.5" stroke="#aac" stroke-width="1.2"></path>
    <path d="M760 125 H765 L768 128 V136 H760 Z" stroke="#5a8be0" stroke-width="1.4"></path>
    <!-- node icon -->
    <g stroke="#6a98e0" stroke-width="1.1">
      <path d="M772 145 V154 M772 145 Q776 144 777 148"></path><circle cx="772" cy="154" r="1"></circle><circle cx="778" cy="145" r="1"></circle>
    </g>
    <rect x="1195" y="144.5" width="8" height="8" stroke="#9ec0f0" stroke-width="1"></rect>
    <path d="M1196.5 146 L1201.5 151 M1201.5 146 L1196.5 151" stroke="#9ec0f0" stroke-width="0.8"></path>
    <!-- g13 -->
    <path d="M758.5 164.5 L761 167 L758.5 169.5" stroke="#ccc" stroke-width="1.2"></path>
    <path d="M768 162.5 H772 L773.5 164 H777 V171 H768 Z" stroke="#5a8be0" stroke-width="1.4"></path>
    <!-- path4, path3 -->
    <g stroke="#6a98e0" stroke-width="1.1">
      <path d="M772 181 V190 M772 181 Q776 180 777 184"></path><circle cx="772" cy="190" r="1"></circle><circle cx="778" cy="181" r="1"></circle>
      <path d="M772 199 V208 M772 199 Q776 198 777 202"></path><circle cx="772" cy="208" r="1"></circle><circle cx="778" cy="199" r="1"></circle>
      <path d="M772 253 V262 M772 253 Q776 252 777 256"></path><circle cx="772" cy="262" r="1"></circle><circle cx="778" cy="253" r="1"></circle>
    </g>
    <!-- use2 -->
    <rect x="767.5" y="215.5" width="5" height="5" stroke="#5a8be0" stroke-width="1.2"></rect>
    <rect x="770.5" y="218.5" width="6" height="6" fill="#2b4f88" stroke="#6a98e0" stroke-width="1.2"></rect>
    <!-- circles -->
    <circle cx="772" cy="239" r="4.2" stroke="#5a8be0" stroke-width="1.4"></circle>
    <circle cx="772" cy="275" r="4.2" stroke="#5a8be0" stroke-width="1.4"></circle>
    <circle cx="772" cy="293" r="4.2" stroke="#5a8be0" stroke-width="1.4"></circle>
    <!-- g15 -->
    <path d="M758.5 308.5 L761 311 L758.5 313.5" stroke="#ccc" stroke-width="1.2"></path>
    <path d="M768 306.5 H772 L773.5 308 H777 V315 H768 Z" stroke="#5a8be0" stroke-width="1.4"></path>
  </g>
</svg>
<div class="a tr" style="left:773px;top:125px"><span style="display: inline-block; transform-origin: left center; transform: scaleX(0.8849);">Layer 1</span></div>
<div class="a tr" style="left:781px;top:143px"><span style="display: inline-block; transform-origin: left center; transform: scaleX(0.9396);">circle15</span></div>
<div class="a tr" style="left:781px;top:161px"><span style="display: inline-block; transform-origin: left center; transform: scaleX(0.9697);">g13</span></div>
<div class="a tr" style="left:781px;top:179px"><span style="display: inline-block; transform-origin: left center; transform: scaleX(0.9893);">path4</span></div>
<div class="a tr" style="left:781px;top:197px"><span style="display: inline-block; transform-origin: left center; transform: scaleX(0.9893);">path3</span></div>
<div class="a tr" style="left:781px;top:215px"><span style="display: inline-block; transform-origin: left center; transform: scaleX(0.8779);">use2</span></div>
<div class="a tr" style="left:781px;top:233px"><span style="display: inline-block; transform-origin: left center; transform: scaleX(0.9893);">path2</span></div>
<div class="a tr" style="left:781px;top:251px"><span style="display: inline-block; transform-origin: left center; transform: scaleX(0.9424);">rect1</span></div>
<div class="a tr" style="left:781px;top:269px"><span style="display: inline-block; transform-origin: left center; transform: scaleX(0.9557);">circle1</span></div>
<div class="a tr" style="left:781px;top:287px"><span style="display: inline-block; transform-origin: left center; transform: scaleX(0.9893);">path1</span></div>
<div class="a tr" style="left:781px;top:305px"><span style="display: inline-block; transform-origin: left center; transform: scaleX(0.9697);">g15</span></div>
<!-- watermark logo -->
<svg class="a" style="left:960px;top:400px" width="280" height="120" viewBox="960 400 280 120">
  <path d="M977 441 Q990 448 1003 443 Q1014 438 1022 437 Q1036 435 1050 426 Q1064 418 1068 404" fill="none" stroke="#e8e8e8" stroke-width="1.1"></path>
  <circle cx="1017" cy="438" r="2.2" fill="none" stroke="#e8e8e8" stroke-width="1"></circle>
  <text transform="translate(980,439) rotate(-13)" font-size="14" fill="#eeeeee" font-family="Liberation Sans" textLength="76" lengthAdjust="spacingAndGlyphs">初期費用</text>
  <text x="1017" y="465" font-size="27" fill="#f2f2f2" stroke="#f2f2f2" stroke-width="0.9" textLength="57" lengthAdjust="spacingAndGlyphs">ゼロ</text>
  <text x="1081" y="465.5" font-size="16" fill="#ececec" textLength="34" lengthAdjust="spacingAndGlyphs">から</text>
  <text x="1031" y="488" font-size="17.5" fill="#ececec" textLength="76" lengthAdjust="spacingAndGlyphs">はじめて</text>
  <text x="1108" y="488.5" font-size="19" font-weight="bold" fill="#f4f4f4" stroke="#f4f4f4" stroke-width="0.8" textLength="114" lengthAdjust="spacingAndGlyphs">クリエイター</text>
  <text x="1043" y="507" font-size="10.5" fill="#d8d8d8" textLength="132" lengthAdjust="spacingAndGlyphs">zero kara hajimete creator</text>
</svg>
<svg class="a" style="left:1248px;top:67px" width="32" height="540" viewBox="1248 67 32 540">
  <g fill="none" stroke="#eeeeee" stroke-width="1.5" stroke-linejoin="round" stroke-linecap="round">
    <!-- new doc -->
    <path d="M1259 77 H1265 L1268 80 V88 H1259 Z"></path><circle cx="1268" cy="77" r="1.3" fill="#2fb040" stroke="none"></circle>
    <!-- open folder -->
    <path d="M1258 101 H1262 L1263.5 102.5 H1268 V110 H1258 Z" fill="#eee"></path><path d="M1259 104 H1268" stroke="#333" stroke-width="1"></path>
    <!-- save -->
    <path d="M1263.5 125 V131 M1260.5 128.5 L1263.5 131.5 L1266.5 128.5" stroke="#2fb040" stroke-width="1.7"></path>
    <rect x="1258" y="132" width="11" height="3" fill="#eee" stroke="none"></rect>
    <!-- print -->
    <rect x="1260" y="149" width="7" height="3" fill="#eee" stroke="none"></rect><rect x="1258" y="152.5" width="11" height="4.5" fill="#eee" stroke="none"></rect><rect x="1260" y="157" width="7" height="2" fill="#eee" stroke="none"></rect>
    <!-- import -->
    <path d="M1259 176 H1265 L1268 179 V187 H1259 Z"></path><path d="M1261 182 H1266 M1264 180 L1266 182 L1264 184" stroke="#2fb040" stroke-width="1.4"></path>
    <!-- export -->
    <path d="M1259 203 H1265 L1268 206 V214 H1259 Z"></path><path d="M1265 209 H1270" stroke="#2fb040" stroke-width="1.4"></path>
    <!-- undo -->
    <path d="M1260 231 L1262 229 M1260 231 L1262 233 M1260 231 H1265 A2.5 2.5 0 0 1 1265 236 H1263" stroke-width="1.3"></path>
    <!-- redo -->
    <path d="M1268 256 L1266 254 M1268 256 L1266 258 M1268 256 H1263 A2.5 2.5 0 0 0 1263 261 H1265" stroke="#777" stroke-width="1.3"></path>
    <!-- copy -->
    <rect x="1258" y="281" width="6" height="6" fill="#eee" stroke="none"></rect><rect x="1262" y="285" width="6" height="6" fill="#eee" stroke="#333" stroke-width="0.8"></rect>
    <!-- cut -->
    <circle cx="1260.5" cy="314.5" r="2" stroke-width="1.3"></circle><circle cx="1267.5" cy="314.5" r="2" stroke-width="1.3"></circle><path d="M1261.5 313 L1266 306 M1266.5 313 L1262 306" stroke-width="1.3"></path>
    <!-- paste -->
    <rect x="1258.5" y="332" width="10" height="10" fill="#eee" stroke="none"></rect><rect x="1261" y="330.5" width="5" height="2" fill="#eee" stroke="#333" stroke-width="0.6"></rect>
    <!-- zoom selection / drawing / page -->
    <circle cx="1263" cy="363" r="4" fill="#eee" stroke="none"></circle><path d="M1266 366 L1268.5 368.5"></path><rect x="1261" y="361" width="4" height="4" fill="#555" stroke="none"></rect>
    <circle cx="1263" cy="387.5" r="4" fill="#eee" stroke="none"></circle><path d="M1266 390.5 L1268.5 393"></path><path d="M1261 386 L1265 389" stroke="#555" stroke-width="1.2"></path>
    <circle cx="1263" cy="412" r="4" fill="#eee" stroke="none"></circle><path d="M1266 415 L1268.5 417.5"></path><rect x="1261.5" y="409.5" width="3" height="5" fill="#555" stroke="none"></rect>
    <!-- zoom page -->
    <rect x="1258.5" y="432" width="10" height="10" stroke-width="1.3"></rect><rect x="1262" y="435.5" width="3" height="3" fill="#eee" stroke="none"></rect>
    <!-- duplicate -->
    <rect x="1258" y="459" width="6" height="6" fill="#eee" stroke="none"></rect><rect x="1262" y="463" width="6" height="6" fill="#2fb040" stroke="none"></rect>
    <!-- clone -->
    <rect x="1258" y="484" width="6" height="6" fill="#eee" stroke="none"></rect><rect x="1262" y="488" width="6" height="6" fill="#333" stroke="#eee" stroke-width="1.2"></rect>
    <!-- unlink -->
    <rect x="1258" y="510" width="6" height="6" fill="#eee" stroke="none"></rect><rect x="1262" y="514" width="6" height="6" fill="#333" stroke="#eee" stroke-width="1.2"></rect>
    <!-- group -->
    <circle cx="1262" cy="541" r="3" fill="#eee" stroke="none"></circle><circle cx="1266" cy="543" r="2.5" fill="#aaa" stroke="none"></circle>
    <path d="M1257 537 V536 H1258 M1269 536 H1270 V537 M1257 546 V547 H1258 M1269 547 H1270 V546" stroke="#2fb040" stroke-width="1"></path>
    <!-- ungroup -->
    <circle cx="1263.5" cy="564.5" r="2" fill="#eee" stroke="none"></circle>
    <path d="M1258 559.5 L1260 561.5 M1269 559.5 L1267 561.5 M1258 569.5 L1260 567.5 M1269 569.5 L1267 567.5" stroke-width="1.2"></path>
  </g>
  <rect x="1253.5" y="580.5" width="22" height="21" rx="2" fill="#2b2b2b" stroke="#222" stroke-width="1"></rect>
  <path d="M1260.5 589 L1264 592.5 L1267.5 589" fill="none" stroke="#eee" stroke-width="1.4"></path>
</svg>
<div class="a" style="left:0;top:607px;width:43px;height:44px;background:#fff"></div>
<svg class="a" style="left:0;top:607px" width="43" height="44" viewBox="0 0 43 44"><path d="M5 5 L38 39 M38 5 L5 39" stroke="#b8204f" stroke-width="3.8" stroke-linecap="round"></path></svg>
<div class="a" style="left:44px;top:607px;width:43px;height:44px;background:#000"></div>
<div class="a" style="left:88px;top:607px;width:43px;height:44px;background:#000"></div>
<div class="a" style="left:133px;top:629px;width:21px;height:22px;background:#1f6ff2"></div>
<div class="a" style="left:155px;top:629px;width:21px;height:22px;background:#22aab5"></div>
<div class="a" style="left:177px;top:629px;width:21px;height:22px;background:#2a0c5e"></div>
<svg class="a" style="left:177px;top:629px" width="21" height="22" viewBox="0 0 21 22"><circle cx="10.5" cy="11" r="6" fill="none" stroke="#d8c8f0" stroke-width="1.5"></circle></svg>
<div class="a" style="left:199px;top:629px;width:21px;height:22px;background:#d0584a"></div>
<div class="a" style="left:221px;top:629px;width:21px;height:22px;background:#d42a50"></div>
<div class="a" style="left:228px;top:636px;width:7px;height:7px;background:#f0c0c8;border-radius:50%"></div>
<div class="a" style="left:243px;top:629px;width:21px;height:22px;background:#eaf4fc"></div>
<svg class="a" style="left:1250px;top:610px" width="30" height="40" viewBox="0 0 30 40"><path d="M4 10 L8.5 5.5 L13 10" fill="none" stroke="#666" stroke-width="1.3"></path><path d="M4 26 L8.5 30.5 L13 26" fill="none" stroke="#666" stroke-width="1.3"></path><path d="M18 27.5 H29 M18 31.5 H29 M18 35.5 H29" stroke="#eee" stroke-width="1.6"></path></svg>
<div class="a st" style="left:15px;top:654px"><span style="display: inline-block; transform-origin: left center; transform: scaleX(0.6864);">フィル:</span></div>
<div class="a st" style="left:0px;top:668px"><span style="display: inline-block; transform-origin: left center; transform: scaleX(0.7105);">ストローク:</span></div>
<div class="a" style="left:51px;top:652px;width:33px;height:13px;background:#d42a50"></div>
<div class="a" style="left:51px;top:666.5px;width:33px;height:12.5px;background:#2a0c5e"></div>
<div class="a st" style="left:92px;top:668px"><span style="display: inline-block; transform-origin: left center; transform: scaleX(0.9246);">3.00</span></div>
<div class="a st" style="left:116px;top:661px"><span style="display: inline-block; transform-origin: left center; transform: scaleX(0.9467);">O:</span></div>
<div class="a" style="left:129px;top:652.5px;width:49px;height:26.5px;background:#2a2a2a"></div>
<div class="a st" style="left:135px;top:661px"><span style="display: inline-block; transform-origin: left center; transform: scaleX(0.8989);">50</span></div>
<svg class="a" style="left:155px;top:661px" width="22" height="10" viewBox="0 0 22 10"><path d="M1 5H10M12 5H21M16.5 0.5V9.5" stroke="#eee" stroke-width="1.8"></path></svg>
<div class="a" style="left:185.5px;top:657.5px;width:2px;height:17px;background:#3f78d8"></div>
<div class="a st" style="left:191px;top:661px"><span style="display: inline-block; transform-origin: left center; transform: scaleX(0.9293);">Layer 1</span></div>
<svg class="a" style="left:235px;top:660px" width="14" height="12" viewBox="0 0 14 12"><path d="M1 6 Q7 0 13 6 Q7 12 1 6Z" fill="none" stroke="#eee" stroke-width="1.5"></path><circle cx="7" cy="6" r="2" fill="#eee"></circle><path d="M3 2 L2 1 M11 2 L12 1 M7 1.5 V0" stroke="#eee"></path></svg>
<svg class="a" style="left:260px;top:659px" width="12" height="13" viewBox="0 0 12 13"><rect x="1" y="6" width="8" height="6" fill="#eee"></rect><path d="M3 6 V3.5 A2.5 2.5 0 0 1 8 2.5" fill="none" stroke="#eee" stroke-width="1.4"></path></svg>
<div class="a st" style="left:283px;top:661px"><span style="display: inline-block; transform-origin: left center; transform: scaleX(0.821);">パス 7 ノード 所属: レイヤー <b>Layer 1</b>. 選択オブジェクトのクリックで拡大縮小ハンドル/回転ハンドルが切り替わります.</span></div>
<div class="a st" style="left:1064px;top:654px"><span style="display: inline-block; transform-origin: left center; transform: scaleX(0.8463);">X:</span></div>
<div class="a st" style="left:1064px;top:668px"><span style="display: inline-block; transform-origin: left center; transform: scaleX(0.8982);">Y:</span></div>
<div class="a st" style="left:1082px;top:654px"><span style="display: inline-block; transform-origin: left center; transform: scaleX(0.9152);">247.14</span></div>
<div class="a st" style="left:1082px;top:668px"><span style="display: inline-block; transform-origin: left center; transform: scaleX(0.9152);">107.70</span></div>
<div class="a st" style="left:1118px;top:661px"><span style="display: inline-block; transform-origin: left center; transform: scaleX(0.8998);">Z:</span></div>
<div class="a" style="left:1130px;top:652px;width:60px;height:26.5px;background:#2a2a2a"></div>
<div class="a st" style="left:1140px;top:661px"><span style="display: inline-block; transform-origin: left center; transform: scaleX(0.9493);">93%</span></div>
<svg class="a" style="left:1167px;top:661px" width="22" height="10" viewBox="0 0 22 10"><path d="M1 5H10M12 5H21M16.5 0.5V9.5" stroke="#eee" stroke-width="1.8"></path></svg>
<div class="a st" style="left:1196px;top:661px"><span style="display: inline-block; transform-origin: left center; transform: scaleX(0.9);">R:</span></div>
<div class="a" style="left:1208px;top:652px;width:65px;height:26.5px;background:#2a2a2a"></div>
<div class="a st" style="left:1220px;top:661px"><span style="display: inline-block; transform-origin: left center; transform: scaleX(0.98);">0.00°</span></div>
<svg class="a" style="left:1251px;top:661px" width="22" height="10" viewBox="0 0 22 10"><path d="M1 5H10M12 5H21M16.5 0.5V9.5" stroke="#eee" stroke-width="1.8"></path></svg>

</body></html>
